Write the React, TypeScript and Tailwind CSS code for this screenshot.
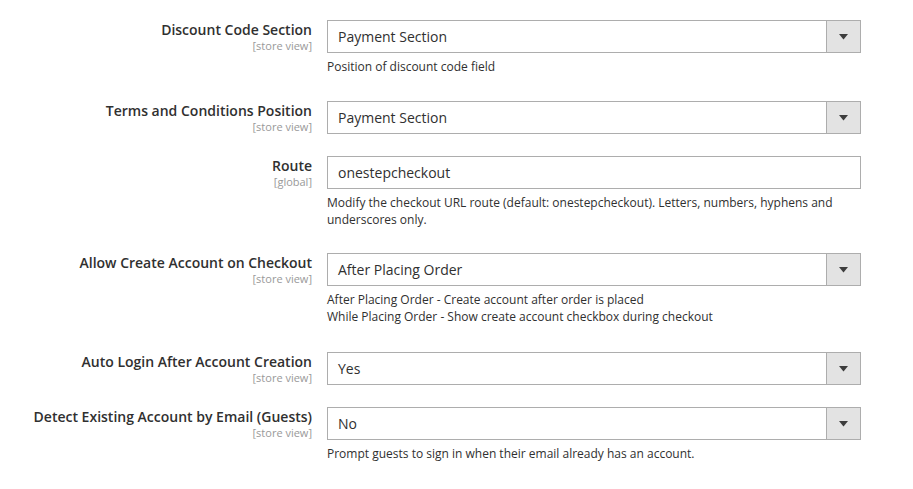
import React from "react";

type Row = {
  label: string;
  scope: string;
  value: string;
  kind: "select" | "input";
  notes?: string[];
  mb: string;
};

const rows: Row[] = [
  { label: "Discount Code Section", scope: "[store view]", value: "Payment Section", kind: "select", notes: ["Position of discount code field"], mb: "mb-[26px]" },
  { label: "Terms and Conditions Position", scope: "[store view]", value: "Payment Section", kind: "select", mb: "mb-[22px]" },
  {
    label: "Route",
    scope: "[global]",
    value: "onestepcheckout",
    kind: "input",
    notes: ["Modify the checkout URL route (default: onestepcheckout). Letters, numbers, hyphens and underscores only."],
    mb: "mb-[25px]",
  },
  {
    label: "Allow Create Account on Checkout",
    scope: "[store view]",
    value: "After Placing Order",
    kind: "select",
    notes: ["After Placing Order - Create account after order is placed", "While Placing Order - Show create account checkbox during checkout"],
    mb: "mb-[27px]",
  },
  { label: "Auto Login After Account Creation", scope: "[store view]", value: "Yes", kind: "select", mb: "mb-[22px]" },
  {
    label: "Detect Existing Account by Email (Guests)",
    scope: "[store view]",
    value: "No",
    kind: "select",
    notes: ["Prompt guests to sign in when their email already has an account."],
    mb: "mb-0",
  },
];

function Field({ row }: { row: Row }) {
  return (
    <div className="flex h-[33px] w-full border border-[#adadad] bg-white">
      <div className="flex flex-1 items-center pl-[10px] text-[14px] text-[#303030]">{row.value}</div>
      {row.kind === "select" && (
        <div className="flex w-[34px] items-center justify-center border-l border-[#adadad] bg-[#e3e3e3]">
          <svg width="9" height="6" viewBox="0 0 9 6">
            <path d="M0 0h9L4.5 5.5z" fill="#3d3d3d" />
          </svg>
        </div>
      )}
    </div>
  );
}

export default function App() {
  return (
    <div className="min-h-[489px] w-[913px] bg-white pt-[20px] text-[#303030]" style={{ fontFamily: '"Open Sans", sans-serif' }}>
      {rows.map((row) => (
        <div key={row.label} className={`flex items-start ${row.mb}`}>
          <div className="flex w-[312px] flex-col items-end text-right">
            <span className="text-[14px] font-semibold leading-[19px] text-[#303030]">{row.label}</span>
            <span className="text-[11px] leading-[14px] text-[#999999]">{row.scope}</span>
          </div>
          <div className="ml-[15px] w-[534px]">
            <Field row={row} />
            {row.notes && (
              <div className="mt-[5px] text-[12px] leading-[17px] text-[#303030]">
                {row.notes.map((n) => (
                  <div key={n}>{n}</div>
                ))}
              </div>
            )}
          </div>
        </div>
      ))}
    </div>
  );
}
